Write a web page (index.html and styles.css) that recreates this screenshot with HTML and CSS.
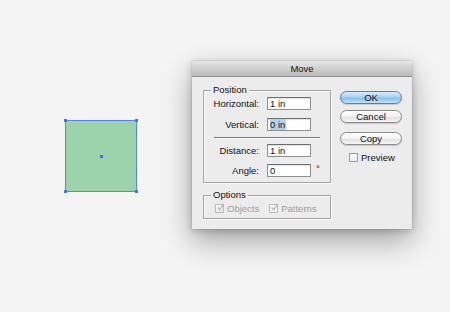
FILE: index.html
```html
<!DOCTYPE html>
<html>
<head>
<meta charset="utf-8">
<link rel="stylesheet" href="styles.css">
</head>
<body>
<div class="canvas">
  <div class="shape">
    <span class="h h-tl"></span><span class="h h-tr"></span>
    <span class="h h-bl"></span><span class="h h-br"></span>
    <span class="h h-c"></span>
  </div>

  <div class="dialog">
    <div class="titlebar">Move</div>
    <div class="dbody">
      <div class="left">
        <div class="group pos">
          <div class="legend">Position</div>
          <div class="row r1"><span class="lbl">Horizontal:</span><span class="field">1 in</span></div>
          <div class="row r2"><span class="lbl">Vertical:</span><span class="field"><span class="sel">0 in</span></span></div>
          <div class="sep"></div>
          <div class="row r3"><span class="lbl">Distance:</span><span class="field">1 in</span></div>
          <div class="row r4"><span class="lbl">Angle:</span><span class="field">0</span><span class="deg">°</span></div>
        </div>
        <div class="group opts">
          <div class="legend">Options</div>
          <div class="checks">
            <span class="chk dis"><span class="box"><svg viewBox="0 0 10 10" width="9" height="9"><path d="M2 5 L4.2 7.5 L8.5 1" fill="none" stroke="#b3b3b3" stroke-width="1.4"/></svg></span>Objects</span>
            <span class="chk dis"><span class="box"><svg viewBox="0 0 10 10" width="9" height="9"><path d="M2 5 L4.2 7.5 L8.5 1" fill="none" stroke="#b3b3b3" stroke-width="1.4"/></svg></span>Patterns</span>
          </div>
        </div>
      </div>
      <div class="right">
        <div class="btn ok">OK</div>
        <div class="btn cancel">Cancel</div>
        <div class="btn copy">Copy</div>
        <span class="chk preview"><span class="box"></span>Preview</span>
      </div>
    </div>
  </div>
</div>
</body>
</html>
```
FILE: styles.css
```css
html, body {
  margin: 0;
  padding: 0;
  background: #f4f4f4;
}
.canvas {
  position: relative;
  width: 450px;
  height: 312px;
  overflow: hidden;
  font-family: "Liberation Sans", Arial, sans-serif;
  font-size: 9.5px;
  color: #111;
}
.shape {
  position: absolute;
  left: 65px;
  top: 120px;
  width: 70px;
  height: 70px;
  background: #9dd3ab;
  border: 1px solid #5585f2;
}
.h {
  position: absolute;
  width: 3px;
  height: 3px;
  background: #3f72f5;
}
.h-tl { left: -2px; top: -2px; }
.h-tr { right: -2px; top: -2px; }
.h-bl { left: -2px; bottom: -2px; }
.h-br { right: -2px; bottom: -2px; }
.h-c { left: 34px; top: 34px; }

.dialog {
  position: absolute;
  left: 192px;
  top: 61px;
  width: 220px;
  height: 168px;
  background: #ececec;
  box-shadow: 0 12px 28px rgba(0,0,0,0.33), 0 2px 8px rgba(0,0,0,0.18), 0 0 1px rgba(0,0,0,0.35);
}
.titlebar {
  height: 15px;
  line-height: 15px;
  text-align: center;
  font-size: 9.5px;
  color: #111;
  background: linear-gradient(#e6e6e6, #bababa);
  border-bottom: 1px solid #8e8e8e;
}
.dbody {
  display: flex;
  padding: 13px 0 0 11px;
}
.left {
  display: flex;
  flex-direction: column;
  gap: 12px;
  width: 128px;
}
.group {
  position: relative;
  border: 1px solid #a4a4a4;
  box-shadow: inset 1px 1px 0 #fafafa, 1px 1px 0 #fafafa;
}
.legend {
  position: absolute;
  left: 7px;
  top: -7px;
  padding: 0 2px;
  background: #ececec;
  line-height: 11px;
}
.pos {
  padding-top: 5px;
  box-sizing: border-box;
  height: 93px;
}
.row {
  display: flex;
  align-items: center;
  height: 14px;
}
.r2 { margin-top: 7px; }
.r4 { margin-top: 6px; }
.lbl {
  width: 63px;
  text-align: right;
  padding-right: 8px;
  box-sizing: border-box;
}
.field {
  width: 44px;
  height: 13px;
  box-sizing: border-box;
  background: #fff;
  border: 1px solid #8f8f8f;
  border-top-color: #6e6e6e;
  line-height: 11px;
  padding-left: 2px;
  box-shadow: inset 0 1px 1px rgba(0,0,0,0.12);
}
.sel {
  background: #b4cdf2;
  padding: 0 1px 0 0;
}
.deg {
  margin-left: 5px;
  margin-top: -3px;
}
.sep {
  height: 1px;
  background: #7a7a7a;
  border-bottom: 1px solid #fafafa;
  margin: 6px 10px 4px 10px;
}
.opts {
  height: 24px;
  box-sizing: border-box;
  padding: 7px 0 0 11px;
}
.checks {
  display: flex;
  gap: 10px;
  color: #9c9c9c;
}
.chk {
  display: inline-flex;
  align-items: center;
  gap: 3px;
}
.box {
  width: 9px;
  height: 9px;
  box-sizing: border-box;
  border: 1px solid #bcbcbc;
  background: linear-gradient(#fdfdfd, #ececec);
  display: inline-flex;
  position: relative;
}
.box svg {
  position: absolute;
  left: 0;
  top: -2px;
}
.right {
  display: flex;
  flex-direction: column;
  align-items: flex-start;
  margin-left: 9px;
  padding-top: 1px;
}
.btn {
  width: 62px;
  height: 13px;
  box-sizing: border-box;
  border: 1px solid #8b8b8b;
  border-radius: 7px;
  background: linear-gradient(#ffffff 0%, #f2f2f2 50%, #e0e0e0 55%, #f6f6f6 100%);
  text-align: center;
  line-height: 11px;
  box-shadow: 0 1px 1px rgba(0,0,0,0.15);
}
.ok {
  border-color: #5a7db8;
  background: linear-gradient(#d9ecfc 0%, #a8d1f5 48%, #80bcef 52%, #bfe3fd 100%);
}
.cancel { margin-top: 6px; }
.copy { margin-top: 9px; }
.preview {
  margin-top: 7px;
  margin-left: 9px;
}
.preview .box {
  border-color: #9a9a9a;
}
```
